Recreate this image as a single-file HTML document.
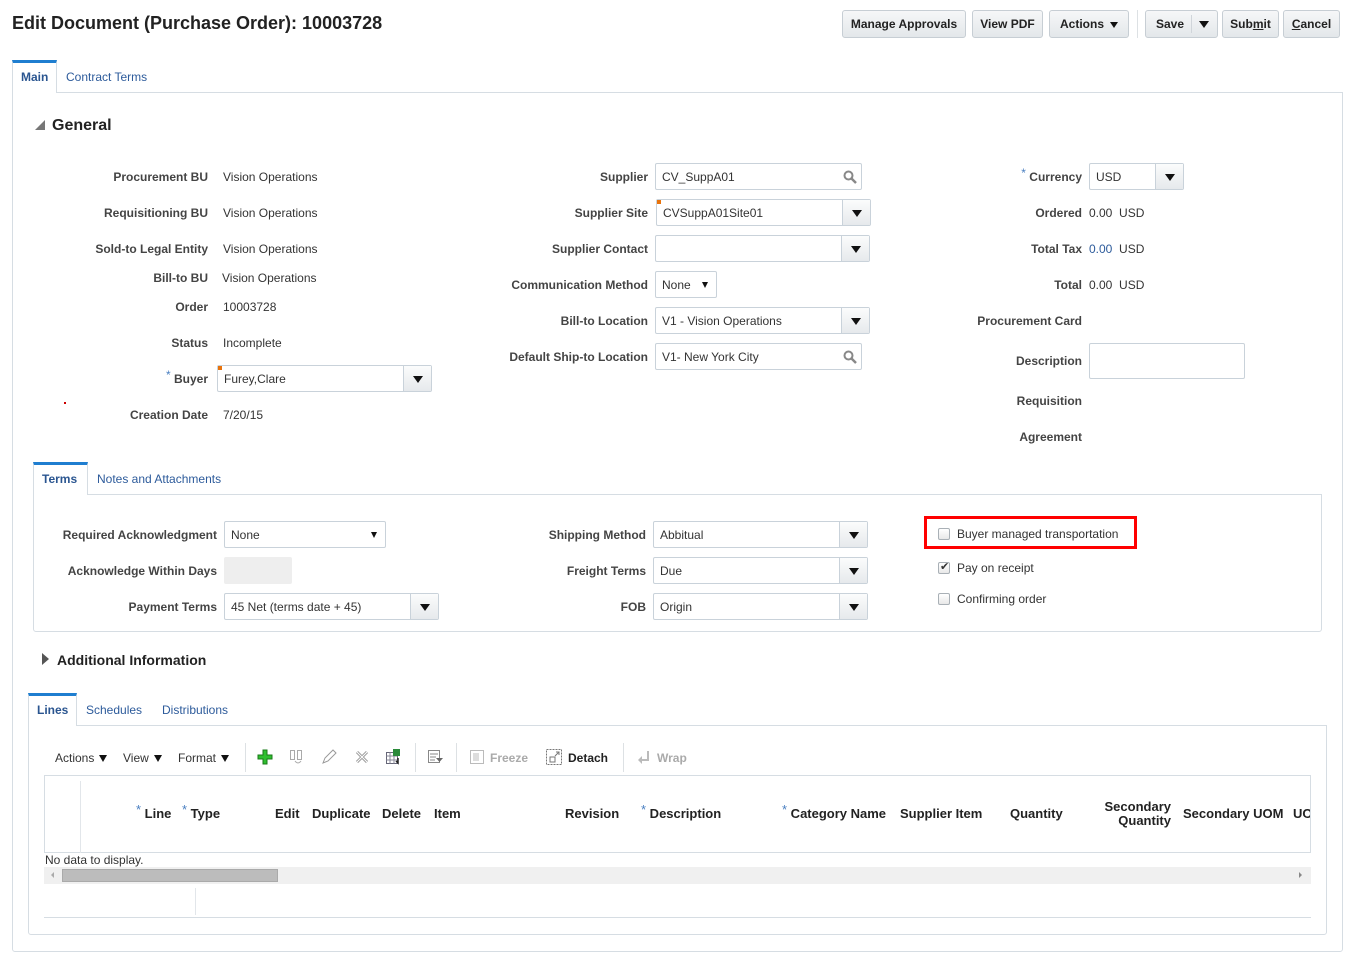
<!DOCTYPE html>
<html><head><meta charset="utf-8"><style>
*{box-sizing:border-box}
body{margin:0;width:1350px;height:958px;position:relative;background:#fff;font-family:"Liberation Sans",Arial,sans-serif;font-size:12px;color:#333;overflow:hidden}
div,span{position:absolute}
.lb{font-weight:bold;color:#444;white-space:nowrap;text-align:right;line-height:14px}
.v{white-space:nowrap;line-height:14px;color:#333}
.in{border:1px solid #c9d2da;background:#fff;border-radius:2px;height:27px}
.in .t{left:6px;top:6px;white-space:nowrap;line-height:14px}
.dd{right:0;top:0;bottom:0;width:28px;border-left:1px solid #c9d2da;background:linear-gradient(#fbfcfc,#e6e9ec);}
.dd:after{content:"";position:absolute;left:9px;top:10px;border-left:5px solid transparent;border-right:5px solid transparent;border-top:7px solid #111}
.sm:after{content:"";position:absolute;right:8px;top:10px;border-left:3.5px solid transparent;border-right:3.5px solid transparent;border-top:6px solid #111}
.btn{top:10px;height:28px;border:1px solid #c7ced4;border-radius:3px;background:linear-gradient(#f6f7f8,#e3e7ea);font-weight:bold;color:#222;font-size:12px;line-height:26px;text-align:center;white-space:nowrap}
.tri{border-left:4px solid transparent;border-right:4px solid transparent;border-top:6px solid #111;display:inline-block;position:relative;vertical-align:middle;margin-left:6px}
.tab{color:#2d5b9b;white-space:nowrap}
.th{font-family:"Liberation Sans Narrow","Liberation Sans",sans-serif;font-weight:bold;font-size:13px;color:#222;white-space:nowrap;line-height:14px}
.req{color:#4a7fc1;font-weight:normal}
.cb{width:12px;height:12px;border:1px solid #a9b0b6;border-radius:2px;background:linear-gradient(#fff,#e8e8e8)}
</style></head><body>

<div style="left:12px;top:13px;font-size:18px;font-weight:bold;color:#222;white-space:nowrap">Edit Document (Purchase Order): 10003728</div>

<div class="btn" style="left:842px;width:124px">Manage Approvals</div>
<div class="btn" style="left:972px;width:71px">View PDF</div>
<div class="btn" style="left:1049px;width:80px">Actions<span class="tri" style="position:relative"></span></div>
<div style="left:1137px;top:10px;width:1px;height:28px;background:#dde1e4"></div>
<div class="btn" style="left:1145px;width:73px;text-align:left;padding-left:10px">Save<span style="left:45px;top:4px;width:1px;height:18px;background:#d0d5da"></span><span style="left:53px;top:10px;border-left:5px solid transparent;border-right:5px solid transparent;border-top:7px solid #111"></span></div>
<div class="btn" style="left:1222px;width:57px">Sub<u>m</u>it</div>
<div class="btn" style="left:1283px;width:57px"><u>C</u>ancel</div>

<div style="left:12px;top:92px;width:1331px;height:860px;border:1px solid #d6dde3;border-radius:0 0 3px 3px"></div>
<div style="left:12px;top:60px;width:45px;height:33px;border:1px solid #d6dde3;border-top:3px solid #1f7ed0;border-bottom:none;background:#fff"></div>
<div class="tab" style="left:21px;top:70px;font-weight:bold;color:#2a5590">Main</div>
<div class="tab" style="left:66px;top:70px">Contract Terms</div>

<div style="left:35px;top:120px;border-left:10px solid transparent;border-bottom:10px solid #777"></div>
<div style="left:52px;top:117px;font-size:16px;font-weight:bold;color:#222">General</div>

<div class="lb" style="top:170px;right:1142px">Procurement BU</div><div class="v" style="left:223px;top:170px">Vision Operations</div>
<div class="lb" style="top:206px;right:1142px">Requisitioning BU</div><div class="v" style="left:223px;top:206px">Vision Operations</div>
<div class="lb" style="top:242px;right:1142px">Sold-to Legal Entity</div><div class="v" style="left:223px;top:242px">Vision Operations</div>
<div class="lb" style="top:271px;right:1142px">Bill-to BU</div><div class="v" style="left:222px;top:271px">Vision Operations</div>
<div class="lb" style="top:300px;right:1142px">Order</div><div class="v" style="left:223px;top:300px">10003728</div>
<div class="lb" style="top:336px;right:1142px">Status</div><div class="v" style="left:223px;top:336px">Incomplete</div>
<div class="lb" style="top:372px;right:1142px"><span class="req" style="position:relative;top:-4px">*</span> Buyer</div>
<div class="in" style="left:217px;top:365px;width:215px"><span style="left:0;top:0;width:4px;height:4px;background:#e8730c"></span><span class="t">Furey,Clare</span><span class="dd"></span></div>
<div style="left:64px;top:402px;width:2px;height:2px;background:#c00"></div>
<div class="lb" style="top:408px;right:1142px">Creation Date</div><div class="v" style="left:223px;top:408px">7/20/15</div>

<div class="lb" style="top:170px;right:702px">Supplier</div>
<div class="in" style="left:655px;top:163px;width:207px"><span class="t">CV_SuppA01</span>
<svg style="position:absolute;right:4px;top:6px" width="14" height="14" viewBox="0 0 14 14"><circle cx="5.5" cy="5.5" r="4" fill="none" stroke="#888" stroke-width="2"/><path d="M8.5 8.5L13 13" stroke="#888" stroke-width="2.5"/></svg></div>
<div class="lb" style="top:206px;right:702px">Supplier Site</div>
<div class="in" style="left:656px;top:199px;width:215px"><span style="left:0;top:0;width:4px;height:4px;background:#e8730c"></span><span class="t">CVSuppA01Site01</span><span class="dd"></span></div>
<div class="lb" style="top:242px;right:702px">Supplier Contact</div>
<div class="in" style="left:655px;top:235px;width:215px"><span class="dd"></span></div>
<div class="lb" style="top:278px;right:702px">Communication Method</div>
<div class="in sm" style="left:655px;top:271px;width:62px"><span class="t">None</span></div>
<div class="lb" style="top:314px;right:702px">Bill-to Location</div>
<div class="in" style="left:655px;top:307px;width:215px"><span class="t">V1 - Vision Operations</span><span class="dd"></span></div>
<div class="lb" style="top:350px;right:702px">Default Ship-to Location</div>
<div class="in" style="left:655px;top:343px;width:207px"><span class="t">V1- New York City</span>
<svg style="position:absolute;right:4px;top:6px" width="14" height="14" viewBox="0 0 14 14"><circle cx="5.5" cy="5.5" r="4" fill="none" stroke="#888" stroke-width="2"/><path d="M8.5 8.5L13 13" stroke="#888" stroke-width="2.5"/></svg></div>

<div class="lb" style="top:170px;right:268px"><span class="req" style="position:relative;top:-4px">*</span> Currency</div>
<div class="in" style="left:1089px;top:163px;width:95px"><span class="t">USD</span><span class="dd"></span></div>
<div class="lb" style="top:206px;right:268px">Ordered</div><div class="v" style="left:1089px;top:206px">0.00&nbsp; USD</div>
<div class="lb" style="top:242px;right:268px">Total Tax</div><div class="v" style="left:1089px;top:242px"><span style="position:relative;color:#2d5b9b">0.00</span>&nbsp; USD</div>
<div class="lb" style="top:278px;right:268px">Total</div><div class="v" style="left:1089px;top:278px">0.00&nbsp; USD</div>
<div class="lb" style="top:314px;right:268px">Procurement Card</div>
<div class="lb" style="top:354px;right:268px">Description</div>
<div class="in" style="left:1089px;top:343px;width:156px;height:36px"></div>
<div class="lb" style="top:394px;right:268px">Requisition</div>
<div class="lb" style="top:430px;right:268px">Agreement</div>

<div style="left:33px;top:494px;width:1289px;height:138px;border:1px solid #d6dde3;border-radius:0 0 3px 3px"></div>
<div style="left:33px;top:462px;width:55px;height:33px;border:1px solid #d6dde3;border-top:3px solid #1f7ed0;border-bottom:none;background:#fff"></div>
<div class="tab" style="left:42px;top:472px;font-weight:bold;color:#2a5590">Terms</div>
<div class="tab" style="left:97px;top:472px">Notes and Attachments</div>

<div class="lb" style="top:528px;right:1133px">Required Acknowledgment</div>
<div class="in sm" style="left:224px;top:521px;width:162px"><span class="t">None</span></div>
<div class="lb" style="top:564px;right:1133px">Acknowledge Within Days</div>
<div style="left:224px;top:557px;width:68px;height:27px;background:#eeeeee;border-radius:2px"></div>
<div class="lb" style="top:600px;right:1133px">Payment Terms</div>
<div class="in" style="left:224px;top:593px;width:215px"><span class="t">45 Net (terms date + 45)</span><span class="dd"></span></div>

<div class="lb" style="top:528px;right:704px">Shipping Method</div>
<div class="in" style="left:653px;top:521px;width:215px"><span class="t">Abbitual</span><span class="dd"></span></div>
<div class="lb" style="top:564px;right:704px">Freight Terms</div>
<div class="in" style="left:653px;top:557px;width:215px"><span class="t">Due</span><span class="dd"></span></div>
<div class="lb" style="top:600px;right:704px">FOB</div>
<div class="in" style="left:653px;top:593px;width:215px"><span class="t">Origin</span><span class="dd"></span></div>

<div style="left:924px;top:516px;width:213px;height:33px;border:3px solid #f00"></div>
<div class="cb" style="left:938px;top:528px"></div><div class="v" style="left:957px;top:527px">Buyer managed transportation</div>
<div class="cb" style="left:938px;top:562px"><span style="left:1px;top:-3px;font-size:11px;color:#333">✔</span></div><div class="v" style="left:957px;top:561px">Pay on receipt</div>
<div class="cb" style="left:938px;top:593px"></div><div class="v" style="left:957px;top:592px">Confirming order</div>

<div style="left:42px;top:653px;border-top:6px solid transparent;border-bottom:6px solid transparent;border-left:7px solid #555"></div>
<div style="left:57px;top:652px;font-size:14px;font-weight:bold;color:#222">Additional Information</div>

<div style="left:28px;top:725px;width:1299px;height:210px;border:1px solid #d6dde3;border-radius:0 0 3px 3px"></div>
<div style="left:28px;top:693px;width:49px;height:33px;border:1px solid #d6dde3;border-top:3px solid #1f7ed0;border-bottom:none;background:#fff"></div>
<div class="tab" style="left:37px;top:703px;font-weight:bold;color:#2a5590">Lines</div>
<div class="tab" style="left:86px;top:703px">Schedules</div>
<div class="tab" style="left:162px;top:703px">Distributions</div>

<div class="v" style="left:55px;top:751px">Actions<span class="tri" style="border-top-width:7px;margin-left:5px"></span></div>
<div class="v" style="left:123px;top:751px">View<span class="tri" style="border-top-width:7px;margin-left:5px"></span></div>
<div class="v" style="left:178px;top:751px">Format<span class="tri" style="border-top-width:7px;margin-left:5px"></span></div>
<div style="left:245px;top:743px;width:1px;height:29px;background:#dde1e4"></div>
<svg style="position:absolute;left:257px;top:749px" width="16" height="16" viewBox="0 0 16 16"><path d="M6 1h4v5h5v4h-5v5H6v-5H1V6h5z" fill="#2fbf2f" stroke="#187a18"/></svg>
<svg style="position:absolute;left:289px;top:749px" width="16" height="16" viewBox="0 0 16 16"><rect x="1.5" y="1.5" width="4" height="9" fill="none" stroke="#aaa"/><rect x="8.5" y="1.5" width="4" height="9" fill="none" stroke="#aaa"/><path d="M6 12q3 4 6 0" fill="none" stroke="#aaa"/></svg>
<svg style="position:absolute;left:321px;top:749px" width="16" height="16" viewBox="0 0 16 16"><path d="M2 14l2-5 8-8 3 3-8 8z" fill="none" stroke="#999"/></svg>
<svg style="position:absolute;left:354px;top:749px" width="16" height="16" viewBox="0 0 16 16"><path d="M3 3l10 10M13 3L3 13" stroke="#999" stroke-width="3"/><path d="M3 3l10 10M13 3L3 13" stroke="#fff" stroke-width="1"/></svg>
<svg style="position:absolute;left:385px;top:748px" width="17" height="17" viewBox="0 0 17 17"><rect x="1.5" y="4.5" width="11" height="11" fill="#fff" stroke="#667"/><path d="M1.5 8h11M1.5 12h11M5 4.5v11M9 4.5v11" stroke="#889"/><rect x="8" y="1" width="7" height="7" fill="#2a8a3a"/><path d="M13 10v5l-2-2" stroke="#222" fill="none" stroke-width="1.5"/></svg>
<div style="left:415px;top:743px;width:1px;height:29px;background:#dde1e4"></div>
<svg style="position:absolute;left:427px;top:749px" width="16" height="16" viewBox="0 0 16 16"><rect x="1.5" y="1.5" width="11" height="12" fill="none" stroke="#888"/><path d="M3 5h8M3 8h6M3 11h5" stroke="#888"/><path d="M9 9h7l-3.5 4z" fill="#666"/></svg>
<div style="left:456px;top:743px;width:1px;height:29px;background:#dde1e4"></div>
<svg style="position:absolute;left:470px;top:750px" width="14" height="14" viewBox="0 0 14 14"><rect x="0.5" y="0.5" width="13" height="13" fill="none" stroke="#bbb"/><path d="M4 3v8M6 3v8M8 3v8" stroke="#bbb"/></svg>
<div class="v" style="left:490px;top:751px;font-weight:bold;color:#aaa">Freeze</div>
<svg style="position:absolute;left:546px;top:749px" width="16" height="16" viewBox="0 0 16 16"><rect x="0.5" y="0.5" width="15" height="15" fill="none" stroke="#777" stroke-dasharray="2 1"/><rect x="4" y="8" width="5" height="5" fill="none" stroke="#777"/><path d="M9 7l4-4M10 3h3v3" stroke="#777" fill="none"/></svg>
<div class="v" style="left:568px;top:751px;font-weight:bold;color:#222">Detach</div>
<div style="left:623px;top:743px;width:1px;height:29px;background:#dde1e4"></div>
<svg style="position:absolute;left:637px;top:750px" width="14" height="14" viewBox="0 0 14 14"><path d="M11 1v9H3" stroke="#bbb" stroke-width="2" fill="none"/><path d="M5 6l-4 4 4 4z" fill="#bbb"/></svg>
<div class="v" style="left:657px;top:751px;font-weight:bold;color:#aaa">Wrap</div>

<div style="left:44px;top:775px;width:1267px;height:78px;border:1px solid #d6dde3;border-bottom:1px solid #d6dde3"></div>
<div style="left:80px;top:781px;width:1px;height:72px;background:#e2e6ea"></div>
<div class="th" style="left:136px;top:807px"><span class="req" style="position:relative;top:-4px">*</span> Line</div>
<div class="th" style="left:182px;top:807px"><span class="req" style="position:relative;top:-4px">*</span> Type</div>
<div class="th" style="left:275px;top:807px">Edit</div>
<div class="th" style="left:312px;top:807px">Duplicate</div>
<div class="th" style="left:382px;top:807px">Delete</div>
<div class="th" style="left:434px;top:807px">Item</div>
<div class="th" style="left:565px;top:807px">Revision</div>
<div class="th" style="left:641px;top:807px"><span class="req" style="position:relative;top:-4px">*</span> Description</div>
<div class="th" style="left:782px;top:807px"><span class="req" style="position:relative;top:-4px">*</span> Category Name</div>
<div class="th" style="left:900px;top:807px">Supplier Item</div>
<div class="th" style="left:1010px;top:807px">Quantity</div>
<div class="th" style="left:1100px;top:800px;text-align:right;width:71px">Secondary<br>Quantity</div>
<div class="th" style="left:1183px;top:807px">Secondary UOM</div>
<div class="th" style="left:1293px;top:807px;width:17px;overflow:hidden">UOM</div>
<div class="v" style="left:45px;top:853px;font-family:'Liberation Sans Narrow','Liberation Sans',sans-serif;font-size:12px">No data to display.</div>
<div style="left:44px;top:867px;width:1267px;height:17px;background:#f0f0f0"></div>
<div style="left:62px;top:869px;width:216px;height:13px;background:#bcbcbc;border:1px solid #aaa"></div>
<div style="left:51px;top:872px;border-top:3px solid transparent;border-bottom:3px solid transparent;border-right:3px solid #aaa"></div>
<div style="left:1299px;top:872px;border-top:3px solid transparent;border-bottom:3px solid transparent;border-left:3px solid #888"></div>
<div style="left:195px;top:888px;width:1px;height:27px;background:#e2e6ea"></div>
<div style="left:44px;top:917px;width:1267px;height:1px;background:#d6dde3"></div>
</body></html>
